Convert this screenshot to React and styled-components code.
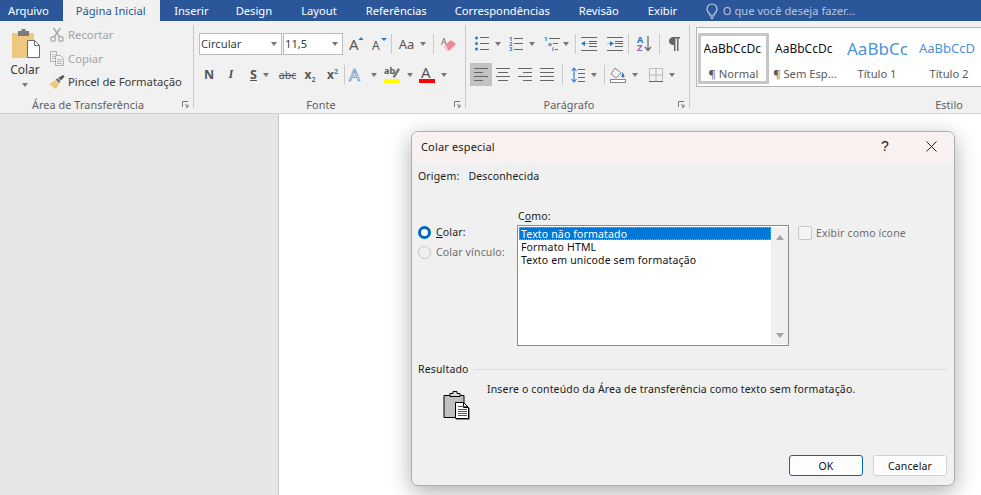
import React from 'react'
import styled, { createGlobalStyle } from 'styled-components'

const Global = createGlobalStyle`
    html, body {
        margin: 0;
        padding: 0;
        height: 100%;
        overflow: hidden;
        background: #fff;
        font-family: "Noto Sans", "Open Sans", sans-serif;
    }
`

const Page = styled.div`
    width: 981px;
    height: 495px;
    display: flex;
    flex-direction: column;
    position: relative;
    overflow: hidden;
`

const TabBar = styled.nav`
    height: 21px;
    background: #2b579a;
    display: flex;
    align-items: stretch;
    flex: none;
`

const Tab = styled.div`
    flex: none;
    display: flex;
    align-items: center;
    padding: ${(p) => p.$pad || '0 14.5px'};
    font-size: 11.2px;
    color: ${(p) => (p.$active ? '#2b579a' : '#fff')};
    background: ${(p) => (p.$active ? '#f1f1f1' : 'transparent')};
    white-space: nowrap;
`

const Search = styled.div`
    display: flex;
    align-items: center;
    gap: 5px;
    margin-left: 14px;
    font-size: 11.2px;
    color: #b4c4dc;
    white-space: nowrap;
`

const Ribbon = styled.section`
    height: 92px;
    flex: none;
    display: flex;
    background: #f1f1f1;
    border-bottom: 1px solid #d2d2d2;
    box-sizing: content-box;
`

const Group = styled.div`
    width: ${(p) => p.$w}px;
    flex: none;
    display: flex;
    flex-direction: column;
    box-sizing: border-box;
    margin: 4px 0 5px;
    border-right: ${(p) => (p.$last ? 'none' : '1px solid #c9c9c9')};
`

const GroupBody = styled.div`
    flex: 1;
    min-height: 0;
    box-sizing: border-box;
    padding: ${(p) => p.$pad || '7px 0 0 5px'};
`

const GroupFoot = styled.div`
    height: 17px;
    flex: none;
    margin-bottom: -5px;
    padding-right: 17px;
    display: grid;
    grid-template-columns: 1fr auto 1fr;
    align-items: center;
    font-size: 10.8px;
    color: #5e5e5e;
    letter-spacing: 0.1px;
    & > span {
        grid-column: 2;
    }
`

const EndFoot = styled(GroupFoot)`
    padding-right: 18px;
    & > span {
        grid-column: 3;
        justify-self: end;
    }
`

const Launcher = styled.svg`
    grid-column: 3;
    justify-self: end;
    margin-right: -13px;
`

const ClipboardBody = styled.div`
    display: flex;
    height: 100%;
`

const PasteColumn = styled.div`
    width: 50px;
    margin-right: -2px;
    flex: none;
    display: flex;
    flex-direction: column;
    align-items: center;
    padding-top: 4px;
    box-sizing: border-box;
    font-size: 12px;
    color: #3c3c3c;
`

const PasteArt = styled.div`
    margin-left: 3px;
    height: 30px;
`

const PasteLabel = styled.div`
    margin-top: 2px;
    line-height: 17px;
`

const PasteCaret = styled.div`
    margin-top: 5px;
    display: flex;
`

const ClipList = styled.div`
    display: flex;
    flex-direction: column;
    margin-top: -2px;
`

const ClipItem = styled.div`
    height: 23.5px;
    flex: none;
    display: flex;
    align-items: center;
    gap: 2px;
    font-size: 11.3px;
    white-space: nowrap;
    color: ${(p) => (p.$off ? '#a3a3a3' : '#3c3c3c')};
`

const ClipIcon = styled.span`
    width: 18px;
    flex: none;
    display: flex;
    justify-content: center;
`

const ToolRow = styled.div`
    display: flex;
    align-items: center;
    height: 23px;
    margin-bottom: ${(p) => p.$mb || 0}px;
`

const Tool = styled.div`
    width: ${(p) => p.$w}px;
    height: 23px;
    flex: none;
    display: flex;
    align-items: center;
    justify-content: center;
    gap: ${(p) => p.$gap ?? 6}px;
    background: ${(p) => (p.$on ? '#c2c2c2' : 'transparent')};
    color: #444;
`

const Caret = styled.i`
    width: 0;
    height: 0;
    flex: none;
    border-left: 3.5px solid transparent;
    border-right: 3.5px solid transparent;
    border-top: 4px solid #777;
`

const Rule = styled.div`
    width: 1px;
    height: 20px;
    flex: none;
    background: #c9c9c9;
`

const Combo = styled.div`
    width: ${(p) => p.$w}px;
    height: 22px;
    flex: none;
    margin-right: 1px;
    box-sizing: border-box;
    background: #fff;
    border: 1px solid #bdbdbd;
    display: flex;
    align-items: center;
    justify-content: space-between;
    padding: 0 4px 0 1px;
    font-size: 11.2px;
    color: #3c3c3c;
`

const BoldLetter = styled.span`
    font-family: ${(p) => (p.$i ? '"Liberation Serif", serif' : '"Noto Sans", sans-serif')};
    font-size: 12.5px;
    font-style: ${(p) => (p.$i ? 'italic' : 'normal')};
    font-weight: 700;
    text-decoration: ${(p) => (p.$u ? 'underline' : 'none')};
    color: #555;
`

const SansMark = styled.span`
    font-size: ${(p) => p.$s || 12}px;
    font-weight: ${(p) => p.$b || 400};
    color: #555;
    text-decoration: ${(p) => (p.$t ? 'line-through' : 'none')};
    & sub, & sup {
        font-size: 7px;
        color: #2b78c5;
        line-height: 0;
    }
`

const Gallery = styled.div`
    width: 295px;
    height: 60px;
    box-sizing: border-box;
    background: #fff;
    border: 1px solid #b5b5b5;
    padding: 5px 0 0 1px;
    display: flex;
    overflow: hidden;
`

const StyleCard = styled.div`
    width: ${(p) => p.$w}px;
    height: 51px;
    flex: none;
    box-sizing: border-box;
    border: 3px solid ${(p) => (p.$on ? '#c6c6c6' : 'transparent')};
    display: flex;
    flex-direction: column;
    align-items: center;
    overflow: hidden;
`

const StylePreview = styled.div`
    width: 60px;
    height: 25px;
    flex: none;
    display: flex;
    align-items: center;
    overflow: hidden;
    white-space: nowrap;
    font-size: ${(p) => p.$s}px;
    color: ${(p) => p.$c};
    margin-top: ${(p) => p.$mt || 0}px;
    margin-bottom: ${(p) => -(p.$mt || 0)}px;
`

const StyleName = styled.div`
    font-size: 11.2px;
    color: #5a5a5a;
    line-height: 14px;
    margin-top: 6px;
    white-space: nowrap;
`

const Workspace = styled.main`
    flex: 1;
    display: flex;
    min-height: 0;
`

const LeftGutter = styled.div`
    width: 278px;
    flex: none;
    background: #e6e6e6;
    border-right: 1px solid #c6c6c6;
`

const Sheet = styled.div`
    flex: 1;
    background: #fff;
`

const Dialog = styled.div`
    position: absolute;
    left: 411px;
    top: 131px;
    width: 544px;
    height: 355px;
    box-sizing: border-box;
    background: #f0f0f0;
    border: 1px solid #adadad;
    border-radius: 7px;
    box-shadow: 0 6px 22px rgba(0, 0, 0, 0.32);
    display: flex;
    flex-direction: column;
    overflow: hidden;
    font-size: 10.5px;
    letter-spacing: 0.16px;
    color: #1a1a1a;
`

const TitleBar = styled.header`
    height: 30px;
    flex: none;
    background: #f9f0f0;
    display: flex;
    align-items: center;
    padding: 0 0 2px 9px;
    box-sizing: border-box;
    font-size: 11px;
`

const TitleText = styled.div`
    flex: 1;
`

const TitleButton = styled.div`
    width: 46px;
    display: flex;
    justify-content: center;
    align-items: center;
    font-size: 14px;
    font-family: "Liberation Sans", sans-serif;
`

const DialogBody = styled.div`
    flex: 1;
    display: flex;
    flex-direction: column;
    padding: 7px 7px 9px 6px;
    min-height: 0;
`

const OriginRow = styled.div`
    display: flex;
    gap: 9px;
    line-height: 15px;
`

const PasteGrid = styled.div`
    display: grid;
    grid-template-columns: 99px 272px 1fr;
    margin-top: 26px;
`

const RadioColumn = styled.div`
    padding-top: 15px;
    display: flex;
    flex-direction: column;
    gap: 6px;
`

const RadioRow = styled.label`
    height: 14px;
    display: flex;
    align-items: center;
    gap: 5px;
    color: ${(p) => (p.$off ? '#6d6d6d' : '#1a1a1a')};
`

const Radio = styled.span`
    width: 13px;
    height: 13px;
    flex: none;
    box-sizing: border-box;
    border-radius: 50%;
    background: ${(p) => (p.$on ? '#fff' : '#f0f0f0')};
    border: ${(p) => (p.$on ? '3.5px solid #0067c0' : '1px solid #c4c4c4')};
`

const ListColumn = styled.div`
    display: flex;
    flex-direction: column;
`

const ListLabel = styled.div`
    line-height: 13px;
    margin-bottom: 2px;
    padding-left: 1px;
`

const ListBox = styled.div`
    height: 121px;
    box-sizing: border-box;
    background: #fff;
    border: 1px solid #838a98;
    display: flex;
    padding: 1px 0 1px 1px;
    line-height: 13px;
`

const Options = styled.div`
    flex: 1;
`

const Option = styled.div`
    height: 13px;
    padding: 1px 0 0 2px;
    white-space: nowrap;
    box-sizing: border-box;
    color: ${(p) => (p.$on ? '#fff' : '#111')};
    background: ${(p) => (p.$on ? '#0078d7' : 'transparent')};
    outline: ${(p) => (p.$on ? '1px dotted #e8962e' : 'none')};
    outline-offset: -1px;
    overflow: visible;
`

const ScrollBar = styled.div`
    width: 17px;
    flex: none;
    background: #f0f0f0;
    display: flex;
    flex-direction: column;
    justify-content: space-between;
    align-items: center;
    padding: 8px 0 6px;
    box-sizing: border-box;
`

const ScrollArrow = styled.i`
    width: 0;
    height: 0;
    border-left: 4px solid transparent;
    border-right: 4px solid transparent;
    border-top: ${(p) => (p.$down ? '5px solid #a3a3a3' : 'none')};
    border-bottom: ${(p) => (p.$down ? 'none' : '5px solid #a3a3a3')};
`

const IconOption = styled.div`
    display: flex;
    align-items: center;
    gap: 4px;
    margin: 16px 0 0 9px;
    color: #6d6d6d;
    height: 14px;
`

const CheckBox = styled.span`
    width: 12px;
    height: 12px;
    flex: none;
    background: #f4f4f4;
    border: 1px solid #c6c6c6;
    border-radius: 2px;
`

const ResultLegend = styled.div`
    display: flex;
    align-items: center;
    gap: 5px;
    margin-top: 16px;
    line-height: 14px;
    &::after {
        content: '';
        flex: 1;
        height: 1px;
        background: #dcdcdc;
    }
`

const ResultRow = styled.div`
    display: flex;
    align-items: flex-start;
    flex: 1;
    padding: 6px 0 0 25px;
    gap: 16px;
`

const ResultText = styled.div`
    line-height: 14px;
    white-space: nowrap;
`

const ResultIcon = styled.svg`
    flex: none;
    margin-top: 9px;
`

const Buttons = styled.footer`
    display: flex;
    justify-content: flex-end;
    gap: 10px;
`

const Button = styled.div`
    width: 74px;
    height: 21px;
    box-sizing: border-box;
    background: #fdfdfd;
    border: 1px solid ${(p) => (p.$primary ? '#0067c0' : '#d0d0d0')};
    border-radius: 3px;
    display: flex;
    align-items: center;
    justify-content: center;
    color: #111;
`

const IconSvg = styled.svg`
    overflow: visible;
    flex: none;
`

const Icon = ({ w = 16, h = 16, children }) => (
    <IconSvg width={w} height={h} viewBox={`0 0 ${w} ${h}`} fill="none">
        {children}
    </IconSvg>
)

const Lines = ({ x1, x2, ys, color = '#666' }) => (
    <>
        {ys.map((y, i) => (
            <rect
                key={y}
                x={Array.isArray(x1) ? x1[i] : x1}
                y={y}
                width={(Array.isArray(x2) ? x2[i] : x2) - (Array.isArray(x1) ? x1[i] : x1)}
                height="1"
                fill={color}
            />
        ))}
    </>
)

const PasteIcon = () => (
    <Icon w={29} h={30}>
        <rect x="0" y="4" width="22" height="25" rx="1" fill="#edc87e" />
        <rect x="6" y="2" width="11" height="5" fill="#7a7a7a" />
        <rect x="9.5" y="0" width="4" height="3" fill="#7a7a7a" />
        <path d="M15.5 11.5h7l5 5v12h-12z" fill="#fff" stroke="#6a6a6a" />
        <path d="M22.5 11.5v5h5" stroke="#6a6a6a" />
    </Icon>
)

const ScissorsIcon = () => (
    <Icon w={14} h={15}>
        <circle cx="3" cy="12" r="2.3" stroke="#a8a8a8" strokeWidth="1.2" />
        <circle cx="11" cy="12" r="2.3" stroke="#a8a8a8" strokeWidth="1.2" />
        <path d="M4.2 10 10.5 1M9.8 10 3.5 1" stroke="#a8a8a8" strokeWidth="1.4" />
    </Icon>
)

const CopyIcon = () => (
    <Icon w={15} h={15}>
        <path d="M.5.5h6v10h-6z" fill="#f1f1f1" stroke="#b0b0b0" />
        <path d="M5.5 4.5h5l3 3v7h-8z" fill="#f1f1f1" stroke="#b0b0b0" />
        <Lines x1={7} x2={12} ys={[8, 10, 12]} color="#bbb" />
        <Lines x1={2} x2={5} ys={[3, 5, 7]} color="#bbb" />
    </Icon>
)

const BrushIcon = () => (
    <Icon w={16} h={14}>
        <path d="M0 9.5 6 5l4 4.5-3 4.5C4.5 12.5 3 11 0 9.5z" fill="#edc87e" />
        <path d="M6.5 4.5 9 3l2.5 3-1.5 2.5z" fill="#777" />
        <path d="M9.5 2.8 14 0l1.5 1.5-3.5 4z" fill="#555" />
    </Icon>
)

const FontSizeIcon = ({ down }) => (
    <Icon w={15} h={17}>
        <text x="0" y="15" fontFamily="Noto Sans" fontSize={down ? 12 : 15} fill="#555">A</text>
        <path d={down ? 'M9 3h6l-3 3z' : 'M9.5 5h5L12 2z'} fill="#2b78c5" />
    </Icon>
)

const EraserIcon = () => (
    <Icon w={16} h={16}>
        <text x="0" y="9" fontFamily="Noto Sans" fontSize="9" fill="#666">A</text>
        <path d="M3 10 10 4l5 4-7 7H6z" fill="#ec8a98" />
        <path d="M3 10l3 5h2l-3-6z" fill="#f4c2c8" />
    </Icon>
)

const BulletsIcon = () => (
    <Icon w={14} h={15}>
        <circle cx="1.5" cy="2" r="1.5" fill="#2b78c5" />
        <circle cx="1.5" cy="7.5" r="1.5" fill="#2b78c5" />
        <circle cx="1.5" cy="13" r="1.5" fill="#2b78c5" />
        <Lines x1={5} x2={14} ys={[1, 7, 13]} />
    </Icon>
)

const NumbersIcon = () => (
    <Icon w={14} h={15}>
        <text x="0" y="5" fontSize="6" fontFamily="Noto Sans" fontWeight="700" fill="#2b78c5">1</text>
        <text x="0" y="10" fontSize="6" fontFamily="Noto Sans" fontWeight="700" fill="#2b78c5">2</text>
        <text x="0" y="15" fontSize="6" fontFamily="Noto Sans" fontWeight="700" fill="#2b78c5">3</text>
        <Lines x1={5} x2={14} ys={[2, 7, 13]} />
    </Icon>
)

const MultiIcon = () => (
    <Icon w={16} h={15}>
        <text x="0" y="5" fontSize="6" fontFamily="Noto Sans" fontWeight="700" fill="#2b78c5">1</text>
        <text x="4" y="10" fontSize="6" fontFamily="Noto Sans" fontWeight="700" fill="#2b78c5">a</text>
        <text x="8" y="15" fontSize="6" fontFamily="Noto Sans" fontWeight="700" fill="#2b78c5">i</text>
        <Lines x1={[5, 9, 11]} x2={[16, 14, 14]} ys={[2, 7, 13]} />
    </Icon>
)

const IndentIcon = ({ flip }) => (
    <Icon w={16} h={14}>
        <Lines x1={0} x2={16} ys={[0, 13]} />
        <Lines x1={8} x2={16} ys={[4, 6, 9]} />
        <path d={flip ? 'M0 6.5h3V4l4 2.5L3 9V7H0z' : 'M7 6.5H4V4L0 6.5 4 9V7h3z'} fill="#2b78c5" />
    </Icon>
)

const SortIcon = () => (
    <Icon w={15} h={17}>
        <text x="0" y="8" fontSize="9" fontWeight="700" fontFamily="Noto Sans" fill="#2b78c5">A</text>
        <text x="0" y="16" fontSize="9" fontWeight="700" fontFamily="Noto Sans" fill="#8e5fb5">Z</text>
        <path d="M11 1v14M8 12l3 3.5 3-3.5" stroke="#666" strokeWidth="1.2" />
    </Icon>
)

const PilcrowIcon = () => (
    <Icon w={11} h={14}>
        <path d="M4.5 0H11v1.5H9.5V14H8V1.5H6.5V14H5V8C1.5 8 0 6 0 4s1.5-4 4.5-4z" fill="#666" />
    </Icon>
)

const TextEffectIcon = () => (
    <Icon w={16} h={16}>
        <text x="0" y="14" fontSize="17" fontFamily="Noto Sans" fill="#e4eff9" stroke="#3a78c0" strokeWidth="0.6">A</text>
    </Icon>
)

const HighlightIcon = () => (
    <Icon w={17} h={17}>
        <text x="0" y="8" fontSize="9" fontWeight="700" fontFamily="Noto Sans" fill="#555">ab</text>
        <path d="M9 10 14 2l2 1.5-5 8H9z" fill="#777" />
        <rect x="0" y="13" width="16" height="4" fill="#ffff00" />
    </Icon>
)

const FontColorIcon = () => (
    <Icon w={16} h={17}>
        <text x="2" y="12" fontSize="15" fontFamily="Noto Sans" fill="#555">A</text>
        <rect x="0" y="13" width="16" height="4" fill="#ff0000" />
    </Icon>
)

const AlignIcon = ({ kind }) => {
    const starts = {
        left: [[0, 14], [0, 9], [0, 14], [0, 9]],
        center: [[0, 14], [2, 12], [0, 14], [2, 12]],
        right: [[0, 14], [5, 14], [0, 14], [5, 14]],
        justify: [[0, 14], [0, 14], [0, 14], [0, 14]],
    }[kind]
    return (
        <Icon w={14} h={13}>
            <Lines
                x1={starts.map((s) => s[0])}
                x2={starts.map((s) => s[1])}
                ys={[0, 4, 8, 12]}
            />
        </Icon>
    )
}

const LineSpacingIcon = () => (
    <Icon w={14} h={16}>
        <path d="M3 1v14M.5 4 3 1l2.5 3M.5 12 3 15l2.5-3" stroke="#2b78c5" strokeWidth="1.1" />
        <Lines x1={7} x2={14} ys={[2, 6, 10, 14]} />
    </Icon>
)

const ShadingIcon = () => (
    <Icon w={16} h={16}>
        <path d="M5 1 1 7l5 4 5-5z" fill="#f1f1f1" stroke="#888" />
        <path d="M12 5c1.5 2 2.5 3 2.5 4a1.5 1.5 0 0 1-3 0c0-1 .5-2 .5-4z" fill="#2b78c5" />
        <rect x=".5" y="12.5" width="15" height="3" fill="#fff" stroke="#888" />
    </Icon>
)

const BordersIcon = () => (
    <Icon w={14} h={14}>
        <path d="M.5.5h13v13H.5zM7 .5v13M.5 7h13" stroke="#888" strokeDasharray="1 1" />
        <path d="M0 13.5h14" stroke="#666" />
    </Icon>
)

const BulbIcon = () => (
    <Icon w={12} h={16}>
        <path d="M3.5 10.5C2 9.5 1 8 1 6a5 5 0 0 1 10 0c0 2-1 3.5-2.5 4.5V12h-5z" stroke="#c8d4e6" strokeWidth="1.1" />
        <path d="M4 14h4M5 15.5h2" stroke="#c8d4e6" />
    </Icon>
)

const LauncherMark = () => (
    <Launcher width="7" height="7" viewBox="0 0 7 7" fill="none">
        <path d="M.5 6V.5H6" stroke="#777" />
        <path d="M3 3l3 3M6 3.5V6H3.5" stroke="#777" />
    </Launcher>
)

const styles = [
    { name: '¶ Normal', text: 'AaBbCcDc', s: 12, c: '#111', w: 71, on: true },
    { name: '¶ Sem Esp...', text: 'AaBbCcDc', s: 12, c: '#111', w: 72 },
    { name: 'Título 1', text: 'AaBbCc', s: 17, c: '#4a94d8', w: 72 },
    { name: 'Título 2', text: 'AaBbCcD', s: 13, c: '#4a94d8', w: 72, mt: -1 },
]

function App() {
    return (
        <Page>
            <Global />
            <TabBar>
                <Tab $pad="0 14px 0 8px">Arquivo</Tab>
                <Tab $active $pad="0 14px 0 13px">Página Inicial</Tab>
                <Tab $pad="0 12.5px 0 14.5px">Inserir</Tab>
                <Tab>Design</Tab>
                <Tab>Layout</Tab>
                <Tab $pad="0 13.5px 0 14.5px">Referências</Tab>
                <Tab>Correspondências</Tab>
                <Tab>Revisão</Tab>
                <Tab>Exibir</Tab>
                <Search>
                    <BulbIcon />
                    O que você deseja fazer...
                </Search>
            </TabBar>

            <Ribbon>
                <Group $w={194}>
                    <GroupBody $pad="0">
                        <ClipboardBody>
                            <PasteColumn>
                                <PasteArt><PasteIcon /></PasteArt>
                                <PasteLabel>Colar</PasteLabel>
                                <PasteCaret><Caret /></PasteCaret>
                            </PasteColumn>
                            <ClipList>
                                <ClipItem $off>
                                    <ClipIcon><ScissorsIcon /></ClipIcon>
                                    Recortar
                                </ClipItem>
                                <ClipItem $off>
                                    <ClipIcon><CopyIcon /></ClipIcon>
                                    Copiar
                                </ClipItem>
                                <ClipItem>
                                    <ClipIcon><BrushIcon /></ClipIcon>
                                    Pincel de Formatação
                                </ClipItem>
                            </ClipList>
                        </ClipboardBody>
                    </GroupBody>
                    <GroupFoot>
                        <span>Área de Transferência</span>
                        <LauncherMark />
                    </GroupFoot>
                </Group>

                <Group $w={272}>
                    <GroupBody>
                        <ToolRow $mb={8}>
                            <Combo $w={83}>Circular<Caret /></Combo>
                            <Combo $w={60}>11,5<Caret /></Combo>
                            <Tool $w={24}><FontSizeIcon /></Tool>
                            <Tool $w={23}><FontSizeIcon down /></Tool>
                            <Rule />
                            <Tool $w={41}><SansMark $s={13}>Aa</SansMark><Caret /></Tool>
                            <Rule />
                            <Tool $w={30}><EraserIcon /></Tool>
                        </ToolRow>
                        <ToolRow>
                            <Tool $w={20}><BoldLetter>N</BoldLetter></Tool>
                            <Tool $w={24}><BoldLetter $i>I</BoldLetter></Tool>
                            <Tool $w={33}><BoldLetter $u>S</BoldLetter><Caret /></Tool>
                            <Tool $w={23}><SansMark $s={10.5} $t>abc</SansMark></Tool>
                            <Tool $w={22}><SansMark $b={700}>x<sub>2</sub></SansMark></Tool>
                            <Tool $w={23}><SansMark $b={700}>x<sup>2</sup></SansMark></Tool>
                            <Rule />
                            <Tool $w={36}><TextEffectIcon /><Caret /></Tool>
                            <Tool $w={34}><HighlightIcon /><Caret /></Tool>
                            <Tool $w={36}><FontColorIcon /><Caret /></Tool>
                        </ToolRow>
                    </GroupBody>
                    <GroupFoot>
                        <span>Fonte</span>
                        <LauncherMark />
                    </GroupFoot>
                </Group>

                <Group $w={224}>
                    <GroupBody $pad="7px 0 0 4px">
                        <ToolRow $mb={8}>
                            <Tool $w={35}><BulletsIcon /><Caret /></Tool>
                            <Tool $w={33}><NumbersIcon /><Caret /></Tool>
                            <Tool $w={37} $gap={3}><MultiIcon /><Caret /></Tool>
                            <Rule />
                            <Tool $w={26}><IndentIcon /></Tool>
                            <Tool $w={26}><IndentIcon flip /></Tool>
                            <Rule />
                            <Tool $w={30}><SortIcon /></Tool>
                            <Rule />
                            <Tool $w={29}><PilcrowIcon /></Tool>
                        </ToolRow>
                        <ToolRow>
                            <Tool $w={22} $on><AlignIcon kind="left" /></Tool>
                            <Tool $w={22}><AlignIcon kind="center" /></Tool>
                            <Tool $w={22}><AlignIcon kind="right" /></Tool>
                            <Tool $w={22}><AlignIcon kind="justify" /></Tool>
                            <Tool $w={4} />
                            <Rule />
                            <Tool $w={41}><LineSpacingIcon /><Caret /></Tool>
                            <Rule />
                            <Tool $w={38}><ShadingIcon /><Caret /></Tool>
                            <Tool $w={37}><BordersIcon /><Caret /></Tool>
                        </ToolRow>
                    </GroupBody>
                    <GroupFoot>
                        <span>Parágrafo</span>
                        <LauncherMark />
                    </GroupFoot>
                </Group>

                <Group $w={291} $last>
                    <GroupBody $pad="2px 0 0 6px">
                        <Gallery>
                            {styles.map((item) => (
                                <StyleCard key={item.name} $w={item.w} $on={item.on}>
                                    <StylePreview $s={item.s} $c={item.c} $mt={item.mt}>
                                        {item.text}
                                    </StylePreview>
                                    <StyleName>{item.name}</StyleName>
                                </StyleCard>
                            ))}
                        </Gallery>
                    </GroupBody>
                    <EndFoot>
                        <span>Estilo</span>
                    </EndFoot>
                </Group>
            </Ribbon>

            <Workspace>
                <LeftGutter />
                <Sheet />
            </Workspace>

            <Dialog>
                <TitleBar>
                    <TitleText>Colar especial</TitleText>
                    <TitleButton>?</TitleButton>
                    <TitleButton>
                        <svg width="11" height="11" viewBox="0 0 11 11">
                            <path d="M.5.5l10 10M10.5.5l-10 10" stroke="#222" />
                        </svg>
                    </TitleButton>
                </TitleBar>
                <DialogBody>
                    <OriginRow>
                        <span>Origem:</span>
                        <span>Desconhecida</span>
                    </OriginRow>
                    <PasteGrid>
                        <RadioColumn>
                            <RadioRow>
                                <Radio $on />
                                <span><u>C</u>olar:</span>
                            </RadioRow>
                            <RadioRow $off>
                                <Radio />
                                <span>Colar vínculo:</span>
                            </RadioRow>
                        </RadioColumn>
                        <ListColumn>
                            <ListLabel>C<u>o</u>mo:</ListLabel>
                            <ListBox>
                                <Options>
                                    <Option $on>Texto não formatado</Option>
                                    <Option>Formato HTML</Option>
                                    <Option>Texto em unicode sem formatação</Option>
                                </Options>
                                <ScrollBar>
                                    <ScrollArrow />
                                    <ScrollArrow $down />
                                </ScrollBar>
                            </ListBox>
                        </ListColumn>
                        <IconOption>
                            <CheckBox />
                            Exibir como ícone
                        </IconOption>
                    </PasteGrid>
                    <ResultLegend>Resultado</ResultLegend>
                    <ResultRow>
                        <ResultIcon width="28" height="29" viewBox="0 0 28 29" fill="none">
                            <path d="M1 4.5h20v22H1z" fill="#c0c0c0" stroke="#000" />
                            <path d="M7 2.5h3V.5h4v2h3v3H7z" fill="#ddd" stroke="#000" />
                            <path d="M12.5 11.5h8l5 5v11h-13z" fill="#fff" stroke="#000" />
                            <path d="M20.5 11.5v5h5" stroke="#000" />
                            <path d="M13 28.5h13.5V17" stroke="#888" />
                            <Lines x1={15} x2={24} ys={[15, 18, 20, 22, 24]} color="#555" />
                        </ResultIcon>
                        <ResultText>
                            Insere o conteúdo da Área de transferência como texto sem formatação.
                        </ResultText>
                    </ResultRow>
                    <Buttons>
                        <Button $primary>OK</Button>
                        <Button>Cancelar</Button>
                    </Buttons>
                </DialogBody>
            </Dialog>
        </Page>
    )
}

export default App
